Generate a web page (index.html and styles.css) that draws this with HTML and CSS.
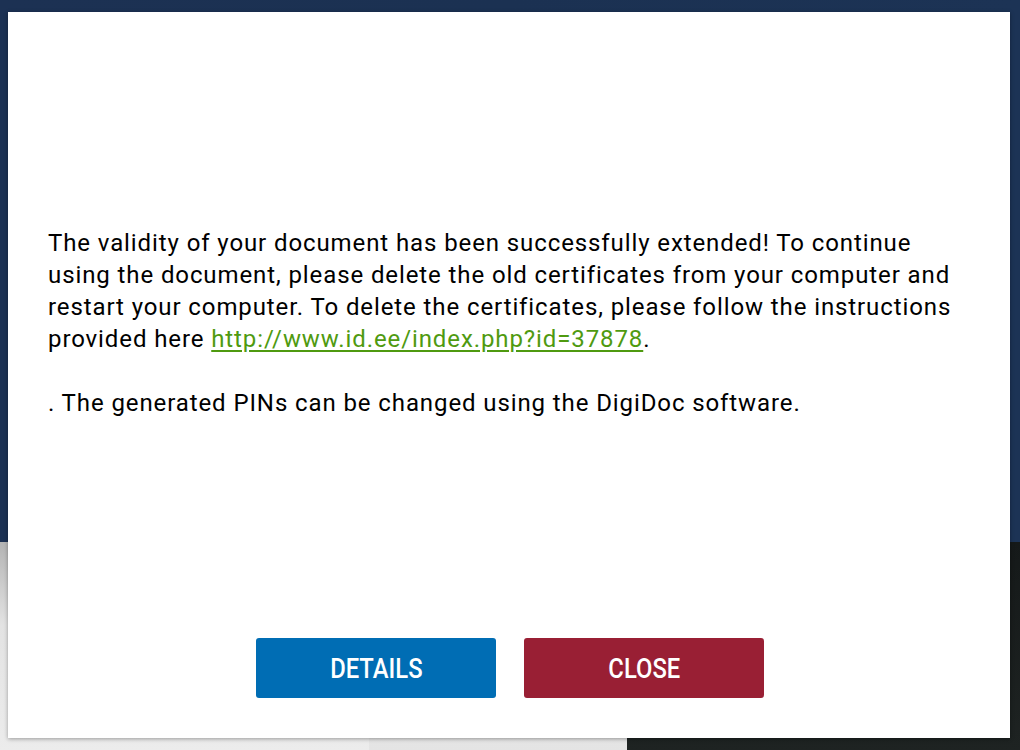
FILE: index.html
```html
<!DOCTYPE html>
<html>
	<head>
		<meta charset="utf-8">
		<title>Document extended</title>
		<link rel="stylesheet" href="styles.css">
	</head>
	<body>
		<div class="page">
			<div class="page-top"></div>
			<div class="page-bottom">
				<div class="part part-left"></div>
				<div class="part part-mid"></div>
				<div class="part part-right"></div>
			</div>
		</div>
		<div class="modal">
			<div class="modal-body">
				<p>The validity of your document has been successfully extended! To continue using the document, please delete the old certificates from your computer and restart your computer. To delete the certificates, please follow the instructions provided here <a href="#">http://www.id.ee/index.php?id=37878</a>.</p>
				<p>. The generated PINs can be changed using the DigiDoc software.</p>
			</div>
			<div class="modal-actions">
				<a class="btn btn-blue" href="#"><span>DETAILS</span></a>
				<a class="btn btn-red" href="#"><span>CLOSE</span></a>
			</div>
		</div>
	</body>
</html>
```
FILE: styles.css
```css
*{
	margin: 0;
	padding: 0;
	box-sizing: border-box;
}
html,body{
	width: 100%;
	height: 100%;
	overflow: hidden;
}
body{
	position: relative;
	font-family: Roboto, "Liberation Sans", sans-serif;
	background-color: #1e2221;
}
a{
	text-decoration: none;
}
.page{
	display: flex;
	flex-direction: column;
	height: 100%;
}
.page-top{
	height: 542px;
	background: linear-gradient(90deg, #1c3153 0%, #1b3152 50%, #1c3355 100%);
}
.page-bottom{
	display: flex;
	flex: 1;
}
.part-left{
	width: 369px;
	background: linear-gradient(180deg, #b4b4b4 0%, #e3e3e3 40%, #ececec 100%);
}
.part-mid{
	width: 258px;
	background: linear-gradient(180deg, #c9c9c9 0%, #e9e9e9 60%, #e4e4e4 100%);
}
.part-right{
	flex: 1;
	background: linear-gradient(180deg, #151919 0%, #1e2322 100%);
}
.modal{
	position: absolute;
	top: 12px;
	left: 8px;
	width: 1002px;
	height: 726px;
	display: flex;
	flex-direction: column;
	padding: 215px 40px 40px;
	background-color: #fff;
	box-shadow: 0 1px 4px rgba(0,0,0,.35);
}
.modal-body{
	max-width: 915px;
	font-size: 24px;
	line-height: 32px;
	letter-spacing: .9px;
	color: #000;
}
.modal-body p + p{
	margin-top: 32px;
}
.modal-body a{
	color: #4f9a10;
	text-decoration: underline;
	text-underline-offset: 3px;
}
.modal-actions{
	display: flex;
	justify-content: center;
	gap: 28px;
	margin-top: auto;
	padding-left: 2px;
}
.btn{
	display: flex;
	align-items: center;
	justify-content: center;
	width: 240px;
	height: 60px;
	border-radius: 3px;
	color: #fff;
	font-size: 28px;
	font-weight: 500;
}
.btn span{
	display: inline-block;
	transform: scaleX(.85);
}
.btn-blue{
	background-color: #006db4;
}
.btn-red{
	background-color: #991f34;
}
```
